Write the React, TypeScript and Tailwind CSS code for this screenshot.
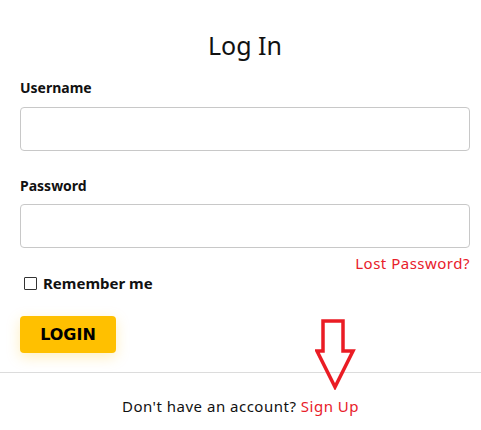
import { useState } from "react"

const DownArrow = () => (
  <svg
    className="absolute left-[315px] top-[318px] pointer-events-none"
    width="42"
    height="72"
    viewBox="0 0 42 72"
    fill="none"
  >
    <path
      d="M8 3 H28 V33 H38 L20 69 L2 33 H8 Z"
      stroke="#ea1c24"
      strokeWidth="3.5"
      strokeLinejoin="miter"
    />
  </svg>
)

export default function App() {
  const [remember, setRemember] = useState(false)

  return (
    <div className="relative w-[481px] h-[430px] bg-white overflow-hidden font-['Noto_Sans',sans-serif] text-black">
      <div className="pl-5 pr-[11px]">
        <h1 className="pt-[27px] text-center text-[25px] leading-[36px] font-normal text-[#111]">Log In</h1>

        <form className="mt-[15px]" onSubmit={(e) => e.preventDefault()}>
          <label className="block text-[14px] leading-[20px] font-bold text-[#111]">Username</label>
          <input
            type="text"
            className="mt-[9px] block w-full h-[44px] rounded-[4px] border border-[#c8c8c8] bg-white px-3 outline-none"
          />

          <label className="mt-[25px] block text-[14px] leading-[20px] font-bold text-[#111]">Password</label>
          <input
            type="password"
            className="mt-[8px] block w-full h-[44px] rounded-[4px] border border-[#c8c8c8] bg-white px-3 outline-none"
          />

          <div className="mt-[5px] flex justify-end">
            <a href="#" className="text-[15px] leading-[20px] tracking-[0.5px] text-[#e8202a]">Lost Password?</a>
          </div>

          <label className="mt-[1px] ml-1 flex items-center gap-[6px] text-[15px] leading-[18px] font-bold text-[#111]">
            <input
              type="checkbox"
              checked={remember}
              onChange={(e) => setRemember(e.target.checked)}
              className="appearance-none w-[13px] h-[13px] border border-[#333] rounded-[1px] bg-white"
            />
            Remember me
          </label>

          <button
            type="submit"
            className="mt-[24px] w-[96px] h-[37px] rounded-[4px] bg-[#ffc000] text-[16px] font-bold text-black shadow-[0_4px_14px_rgba(255,192,0,0.25)] font-['DejaVu_Sans',Verdana,sans-serif]"
          >
            LOGIN
          </button>
        </form>
      </div>

      <div className="mt-[19px] border-t border-[#dcdcdc]" />

      <p className="mt-[23px] text-center text-[15px] leading-[20px] tracking-[0.5px] text-[#111]">
        Don't have an account? <a href="#" className="text-[#e8202a]">Sign Up</a>
      </p>

      <DownArrow />
    </div>
  )
}
